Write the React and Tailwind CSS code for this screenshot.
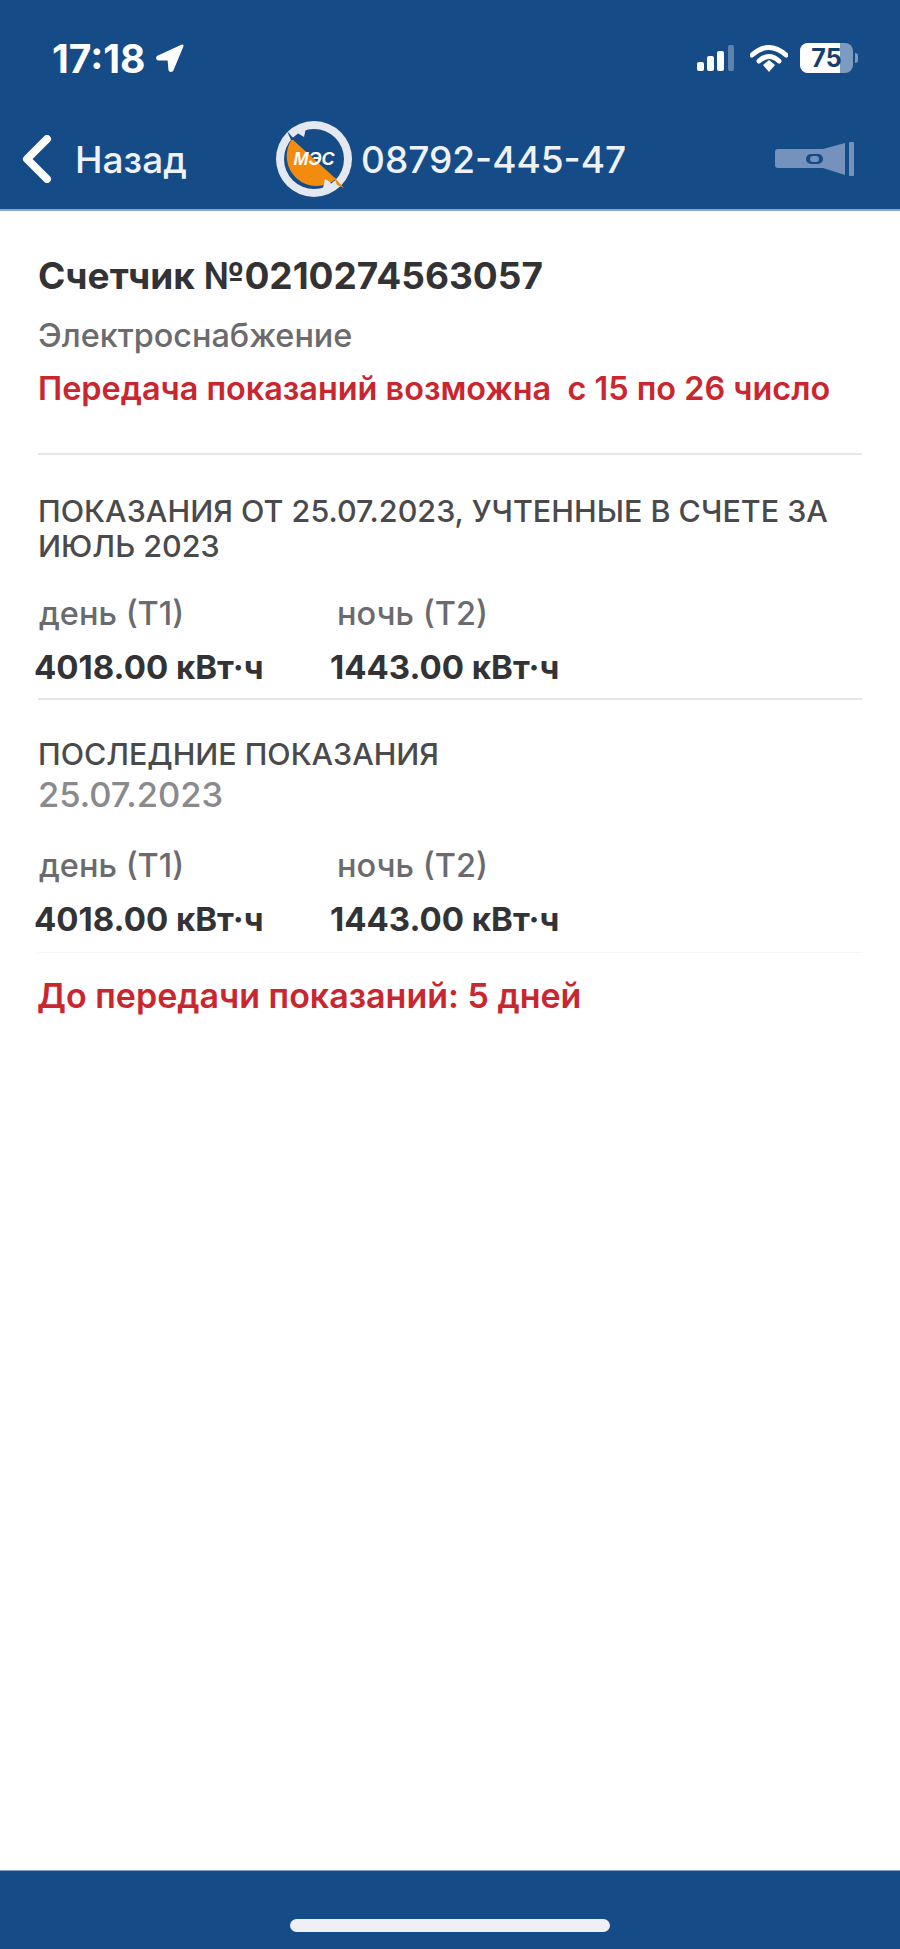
function StatusBar() {
  return (
    <div className="flex items-center justify-between h-[58px] mt-[29px] pl-[52px] pr-[42px]">
      <div className="flex items-center gap-[10px]">
        <span className="text-[39px] font-bold text-white leading-none">17:18</span>
        <svg width="30" height="30" viewBox="0 0 30 30">
          <path d="M27 3 L3 14 Q2 16 4 16 L14 16 L15 27 Q16 28 17 27 Z" fill="#fff" stroke="#fff" strokeWidth="3" strokeLinejoin="round" />
        </svg>
      </div>
      <div className="flex items-center">
        <svg width="40" height="28" viewBox="0 0 40 28">
          <rect x="0" y="18" width="7" height="9" rx="2" fill="#fff" />
          <rect x="10" y="12" width="7" height="15" rx="2" fill="#fff" />
          <rect x="20" y="7" width="7" height="20" rx="2" fill="#fff" />
          <rect x="31" y="1" width="6" height="26" rx="2" fill="#5c82ad" />
        </svg>
        <svg className="ml-[13px]" width="38" height="28" viewBox="0 0 38 28">
          <path d="M2 11 Q19 -4 36 11" fill="none" stroke="#fff" strokeWidth="5" strokeLinecap="round" />
          <path d="M9 17 Q19 8 29 17" fill="none" stroke="#fff" strokeWidth="5" strokeLinecap="round" />
          <path d="M13 21 L19 16 L25 21 L19 28 Z" fill="#fff" />
        </svg>
        <div className="relative ml-[12px] w-[53px] h-[30px] rounded-[8px] overflow-hidden bg-[#7d9ac0] flex items-center justify-center">
          <div className="absolute left-0 top-0 bottom-0 w-[40px] bg-white" />
          <span className="relative text-[25px] font-bold text-[#153f70] leading-none">75</span>
        </div>
        <div className="ml-[2px] w-[3px] h-[10px] rounded-r-full bg-[#7d9ac0]" />
      </div>
    </div>
  );
}

function Logo() {
  return (
    <svg width="80" height="80" viewBox="0 0 80 80">
      <circle cx="40" cy="40" r="38" fill="#e4e9f1" />
      <circle cx="40" cy="40" r="30" fill="#154c87" />
      <path d="M18 20 L62 60 A30 30 0 0 1 18 20 Z" fill="#f28c0f" />
      {/* arrow heads where the ring overlaps the two halves */}
      <path d="M20 9 L32 9 L30 18 L25 15 Z" fill="#e4e9f1" />
      <path d="M13 12 L21 21 L17 21 Z" fill="#154c87" />
      <path d="M49 69 L51 60 L56 63 L60 71 Z" fill="#e4e9f1" />
      <path d="M60 58 L70 69 L63 66 Z" fill="#f28c0f" />
      <text x="40" y="46" textAnchor="middle" fontSize="18" fontWeight="700" fontStyle="italic" fill="#fff" fontFamily="Liberation Sans, sans-serif">МЭС</text>
    </svg>
  );
}

function Flashlight() {
  return (
    <svg width="82" height="34" viewBox="0 0 82 34">
      <path d="M3 7 H48 L70 1 V33 L48 26 H3 Q0 26 0 23 V10 Q0 7 3 7 Z" fill="#7492bb" />
      <rect x="74" y="0" width="5" height="34" rx="1" fill="#7492bb" />
      <rect x="31" y="12" width="17" height="10" rx="5" fill="#154c87" />
      <rect x="35" y="14" width="9" height="6" rx="3" fill="#7492bb" />
    </svg>
  );
}

function Readings({ day, night }) {
  return (
    <div className="grid grid-cols-[296px_1fr]">
      <div>
        <div className="pl-[5px] text-[32.5px] leading-[36px] font-medium text-[#6b6b6e]">день (Т1)</div>
        <div className="mt-[17px] text-[33px] leading-[36px] font-bold text-[#333335]">{day} кВт·ч</div>
      </div>
      <div>
        <div className="pl-[7px] text-[32.5px] leading-[36px] font-medium text-[#6b6b6e]">ночь (Т2)</div>
        <div className="mt-[17px] text-[33px] leading-[36px] font-bold text-[#333335]">{night} кВт·ч</div>
      </div>
    </div>
  );
}

export default function App() {
  return (
    <div className="w-[900px] h-[1949px] flex flex-col bg-white font-['Inter',sans-serif]">
      <header className="h-[211px] shrink-0 bg-[#154c87] border-b-2 border-[#8ea6c4]">
        <StatusBar />
        <div className="flex items-center justify-between mt-[32px] h-[80px] pl-[22px] pr-[43px]">
          <div className="flex items-center w-[252px]">
            <svg width="30" height="48" viewBox="0 0 30 48">
              <path d="M25 4 L5 24 L25 44" fill="none" stroke="#fff" strokeWidth="8" strokeLinecap="round" strokeLinejoin="round" />
            </svg>
            <span className="ml-[23px] text-[37px] font-medium text-[#eef2f7] leading-none">Назад</span>
          </div>
          <div className="flex items-center flex-1">
            <Logo />
            <span className="ml-[7px] text-[37px] font-medium text-[#eef2f7] leading-none">08792-445-47</span>
          </div>
          <Flashlight />
        </div>
      </header>

      <main className="flex-1 px-[38px]">
        <h1 className="mt-[44px] text-[37px] leading-[42px] font-bold text-[#333335]">Счетчик №0210274563057</h1>
        <p className="mt-[21px] text-[32.4px] leading-[36px] font-medium text-[#6b6b6e]">Электроснабжение</p>
        <p className="mt-[17px] text-[32.4px] leading-[36px] font-semibold text-[#c9262f] whitespace-pre">Передача показаний возможна  с 15 по 26 число</p>

        <hr className="mt-[46px] border-t-2 border-[#e6e6e6]" />

        <p className="mt-[38px] w-[810px] text-[30.5px] leading-[35px] font-medium text-[#4a4a4c]">ПОКАЗАНИЯ ОТ 25.07.2023, УЧТЕННЫЕ В СЧЕТЕ ЗА ИЮЛЬ 2023</p>
        <div className="mt-[33px] -ml-[4px]">
          <Readings day="4018.00" night="1443.00" />
        </div>
        <hr className="mt-[13px] border-t-2 border-[#e6e6e6]" />

        <p className="mt-[36px] text-[30.4px] leading-[36px] font-medium text-[#4a4a4c]">ПОСЛЕДНИЕ ПОКАЗАНИЯ</p>
        <p className="mt-[5px] text-[34.5px] leading-[36px] font-medium text-[#8a8a8d]">25.07.2023</p>
        <div className="mt-[35px] -ml-[4px]">
          <Readings day="4018.00" night="1443.00" />
        </div>
        <hr className="mt-[15px] border-t border-[#f6f6f6]" />

        <p className="mt-[23px] text-[34px] leading-[40px] font-semibold text-[#c9262f] -ml-[1px]">До передачи показаний: 5 дней</p>
      </main>

      <footer className="h-[79px] shrink-0 bg-[#154c87] border-t border-[#7fa0c6] flex justify-center pt-[48px]">
        <div className="w-[320px] h-[13px] rounded-full bg-[#eef0f4]" />
      </footer>
    </div>
  );
}
